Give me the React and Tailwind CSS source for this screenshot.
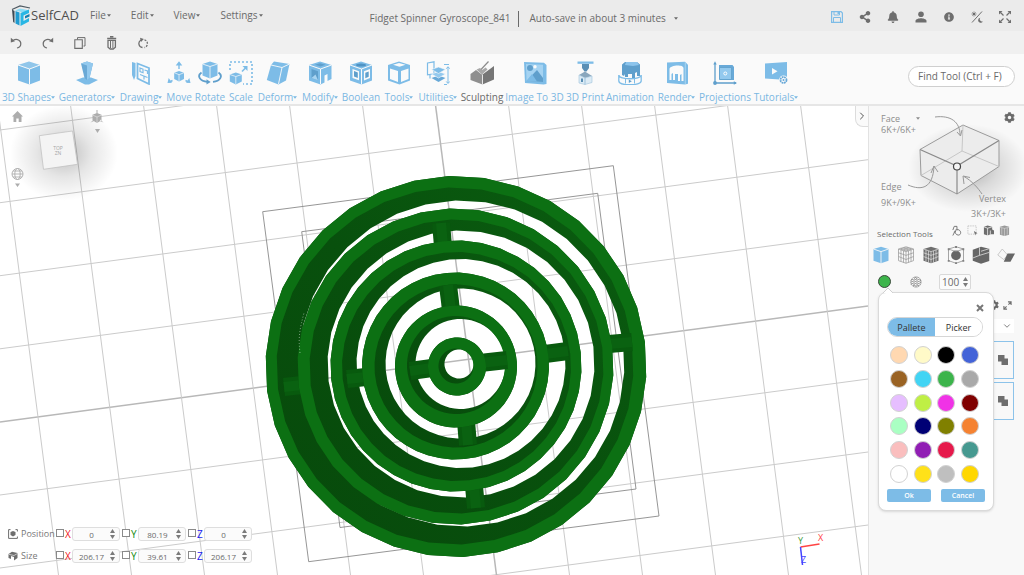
import React from "react";
import { ChevronDown, ChevronRight } from "lucide-react";
import { FaShareAlt, FaBell, FaInfoCircle, FaCog } from "react-icons/fa";

const BLUE = "#7dbce7";
const GRAY = "#6e6e6e";

/* ---------- small shared parts ---------- */

function Caret({ className = "" }) {
  return (
    <svg viewBox="0 0 4 3" className={`inline-block h-[3px] w-1 shrink-0 ${className}`} aria-hidden="true">
      <path d="M0 .3h4L2 2.800z" fill="currentColor" />
    </svg>
  );
}

function Svg({ children, box = "0 0 24 24", className = "size-6" }) {
  return (
    <svg viewBox={box} className={`shrink-0 ${className}`} fill="none" aria-hidden="true">
      {children}
    </svg>
  );
}

function Cube({ fill = BLUE, line = "#fafafa" }) {
  return (
    <g>
      <path d="M12 .5 23 4v15.500L12.500 23.500 1 19.500V4z" fill={fill} />
      <path d="M1 4l11.500 4L23 4M12.500 8v15.500" stroke={line} strokeWidth="1" />
      <path d="M12 .5 23 4 12.500 7.500 1 4z" fill="#fff" opacity=".15" />
    </g>
  );
}

/* ---------- toolbar drawings ---------- */

const icons = {
  shapes: (
    <Svg><Cube /></Svg>
  ),
  generators: (
    <Svg>
      <path d="M1 19l7-2.500h8l7 2.500-9 4.500h-4z" fill={BLUE} />
      <path d="M6 2.500 12 .5l6 2-3.500 14.500L12 19l-2.500-2z" fill="#6aa9d6" />
      <path d="M12 4.500 18 2.500l-3.500 14.500L12 19zM6 2.500 12 .5l6 2-6 2z" fill="#93c9ee" />
    </Svg>
  ),
  drawing: (
    <Svg>
      <path d="M3 1l3.500 1v13L5 19 3 14z" fill={BLUE} />
      <path d="M8.500 2.500l11.500 4.500V23L8.500 17.500z" stroke={BLUE} strokeWidth="1.800" />
      <path d="M11 7l3 1.200v3.500l-3-1.200zM15.500 9l3 1v3M11 13.500l7.500 3M15 15v3.500" stroke={BLUE} strokeWidth="1.200" />
    </Svg>
  ),
  move: (
    <Svg>
      <path d="M12 10l5 1.700V18l-5 2.500L7.200 18v-6.300z" fill={BLUE} />
      <path d="M7.200 11.700l4.900 2 4.900-2M12 13.700v6.500" stroke="#fafafa" strokeWidth=".7" />
      <path d="M12 8V3M5.500 19.500 2.500 21M18.500 19.500l3 1.500" stroke={BLUE} strokeWidth="1.400" />
      <path d="M12 .3 15.300 4.500H8.700zM.5 22l1.200-5 3.300 4.800zM23.500 22l-1.200-5-3.300 4.800z" fill={BLUE} />
    </Svg>
  ),
  rotate: (
    <Svg>
      <path d="M12 .5 19.500 3v11.500L12 17.500 4.500 14.500V3z" fill={BLUE} />
      <path d="M4.500 3 12 5.500 19.500 3M12 5.500v12" stroke="#fafafa" strokeWidth=".8" />
      <path d="M3.500 11.500C-1.500 15 2 20 9.500 20.800M20.500 11.500c5 3.500 1.500 8.500-5.500 9.300" stroke="#5f9fcc" strokeWidth="1.800" />
      <path d="M8.500 18.300l4.200 2.600-4.200 2.500z" fill="#5f9fcc" />
    </Svg>
  ),
  scale: (
    <Svg>
      <path d="M1 9V1h22v22H14" stroke={BLUE} strokeWidth="1.600" strokeDasharray="2 2" />
      <path d="M6.800 11.500l6 2v7l-6 3-6-3v-7z" fill={BLUE} />
      <path d="M.8 13.500l6 2 6-2M6.800 15.500v7.500" stroke="#fafafa" strokeWidth=".7" />
      <path d="M13 10.500l4-4" stroke={BLUE} strokeWidth="1.600" />
      <path d="M13.500 5h5v5z" fill={BLUE} />
    </Svg>
  ),
  deform: (
    <Svg>
      <path d="M8 .5 23.500 3 20 19.500 12.500 23.500.8 19 5 4z" fill={BLUE} />
      <path d="M5 4l11 2.500L23.500 3M16 6.500 12.500 23" stroke="#fafafa" strokeWidth=".9" />
    </Svg>
  ),
  modify: (
    <Svg>
      <path d="M12 .5 23.500 4v14l-4 2v-7l-3 1.500v7l-4 2L1 19.500V4z" fill={BLUE} />
      <path d="M1 4l11.500 4 11-4M12.500 8v15" stroke="#fafafa" strokeWidth="1" />
      <path d="M3.500 8l6.500 2.300v9L3.500 17z" fill="#5f9fcc" />
      <path d="M3.500 17l4-3.500 2.500 5.800z" fill="#a9d4f1" />
      <path d="M7 3.700l5-1.400 5.500 1.500-5 1.700z" fill="#5f9fcc" />
    </Svg>
  ),
  boolean: (
    <Svg>
      <path d="M12 .5 23 4v15.500L12.500 23.500 1 19.500V4z" fill={BLUE} />
      <path d="M1 4l11.500 4L23 4M12.500 8v15.500" stroke="#fafafa" strokeWidth="1" />
      <ellipse cx="12" cy="4" rx="5" ry="1.600" fill="#4f93c4" />
      <path d="M3.500 8l6.500 2.300v9L3.500 17zM15 10.300 21 8v9l-6 2.500z" fill="#fafafa" />
      <path d="M5 10l3.800 1.400v5.500L5 15.500zM16.300 11.700l3.400-1.300v5.300l-3.400 1.500z" fill="#5f9fcc" />
    </Svg>
  ),
  tools: (
    <Svg>
      <path d="M12 .5 23 4v15.500L12.500 23.500 1 19.500V4z" fill={BLUE} />
      <path d="M6 3.800 12 2l6.500 1.800-6 2zM3 7.500 11 10v11l-8-3zM14 10l7.500-2.500V18L14 21z" fill="#fafafa" />
    </Svg>
  ),
  utilities: (
    <Svg>
      <path d="M1.500 2 8 .8v12l-6.500 1zM4 13.500v4" stroke={BLUE} strokeWidth="1.200" />
      <path d="M5.500 17l7-2.500 7 2.500-7 4z" fill="#68a9d8" />
      <path d="M5.500 13l7-2.500 7 2.500-7 4z" fill="#93c9ee" stroke="#fafafa" strokeWidth=".6" />
      <path d="M5.500 8.500l7-2.500 7 2.500-7 4z" fill={BLUE} stroke="#fafafa" strokeWidth=".6" />
      <path d="M22 6v16M20.300 7.700 22 5.700l1.700 2M20.300 20.500l1.700 2 1.700-2M18 3.500h5M18 23.500h3" stroke={BLUE} strokeWidth="1" />
    </Svg>
  ),
  sculpting: (
    <Svg>
      <path d="M.5 13 6 9l6.500 5v9.500L.5 19z" fill="#8f8f8f" />
      <path d="M12.500 13.500 24 5v13.500l-11.500 5z" fill="#767676" />
      <path d="M12.500 14v9.500" stroke="#fafafa" strokeWidth=".8" />
      <path d="M6.500 8.500 12 13.500l5.500-5-1.800-2-3.700 2.500-2-2z" fill="#a8a8a8" />
      <path d="M18.500.5 11 8.500" stroke="#8b8b8b" strokeWidth="1.200" />
    </Svg>
  ),
  image: (
    <Svg>
      <path d="M1 1l20 .8 2.500 2.200v19l-3 .5L2 22z" fill={BLUE} />
      <path d="M3 3l17 .8v17L3.500 20z" fill="#a5d3f2" />
      <circle cx="7" cy="7" r="3" fill="#5f9fcc" />
      <circle cx="12" cy="5.800" r="1.700" fill="#fafafa" />
      <path d="M3.500 20 14 9l6 8v4z" fill="#5f9fcc" />
      <path d="M3.500 20 9 13l5 7.500z" fill={BLUE} />
    </Svg>
  ),
  print: (
    <Svg>
      <path d="M4.500.5h16v2.300h-16z" fill={BLUE} />
      <path d="M9 3h7v4l-2.500 3.500h-2L9 7z" fill="#5a8fb5" />
      <path d="M6 14l6-3.500L19 15l-7 2z" fill="#8aa7bd" />
      <path d="M6 14v8l6 1.500V17zM12 17l7-2v6.500l-7 2z" fill="#dcebf5" stroke="#9fc3dc" strokeWidth=".6" />
      <path d="M8 17.500h2V21H8z" fill="#5a8fb5" />
    </Svg>
  ),
  animation: (
    <Svg>
      <path d="M4 14V3.500L7 1h12l3 2.500V15H19v-4l-2 1v5h-3v-4H10v3H7v-3l-1 2z" fill="#5f9fcc" />
      <path d="M8 1h11l2 3-6 1-8-1z" fill="#8cc4ec" />
      <path d="M.8 14v6c0 5 22.400 5 22.400 0v-6M.8 14c0 5 22.400 5 22.400 0" stroke={BLUE} strokeWidth="1.300" />
      <path d="M7.500 17.500v5M16.500 17.500v5" stroke={BLUE} />
      <path d="M10.800 18.500v3.500l3-1.700z" fill="#5f9fcc" />
    </Svg>
  ),
  render: (
    <Svg>
      <path d="M2 1.500l18-.7 3 3v19l-3 .7L2 22z" fill={BLUE} />
      <path d="M20.300 1v22" stroke="#a9d4f1" />
      <path d="M4.500 8c0-4 14-5 14-1v13h-2v-7l-1.500 1v6h-2v-7h-3v6H8v-7l-1.500 1v6h-2z" fill="#fafafa" />
    </Svg>
  ),
  projections: (
    <Svg>
      <path d="M6 4h13.500L21 6v13H7l-1-1.500z" fill="#68a9d8" />
      <path d="M6.500 6.500h12v12h-12z" fill="#93c9ee" stroke="#5f9fcc" strokeWidth=".8" />
      <circle cx="12.300" cy="12.500" r="1.500" stroke="#fff" />
      <path d="M2 2v20h21" stroke="#5f9fcc" strokeWidth="1.300" />
      <path d="M.3 3.500 2 .3l1.700 3.200zM20.800 20.200 24 22l-3.200 1.800z" fill="#5f9fcc" />
      <circle cx="2" cy="22" r="1.900" fill="#5f9fcc" />
    </Svg>
  ),
  tutorials: (
    <Svg>
      <path d="M1 2.500l22-1.500v18L1 17.500z" fill={BLUE} />
      <path d="M8 7v6.500l5.500-3.200z" fill="#fafafa" />
      <circle cx="19.500" cy="19" r="4.500" fill="#fafafa" />
      <circle cx="19.500" cy="19" r="3" stroke="#68a9d8" strokeWidth="1.800" strokeDasharray="1.800 .6" />
      <circle cx="19.500" cy="19" r="1" fill="#68a9d8" />
    </Svg>
  ),
};

const tools = [
  { label: "3D Shapes", icon: "shapes", menu: true, w: "w-[57px]" },
  { label: "Generators", icon: "generators", menu: true, w: "w-[60px]" },
  { label: "Drawing", icon: "drawing", menu: true, w: "w-12" },
  { label: "Move", icon: "move", w: "w-7" },
  { label: "Rotate", icon: "rotate", w: "w-[34px]" },
  { label: "Scale", icon: "scale", w: "w-7" },
  { label: "Deform", icon: "deform", menu: true, w: "w-[45px]" },
  { label: "Modify", icon: "modify", menu: true, w: "w-10" },
  { label: "Boolean", icon: "boolean", w: "w-[42px]" },
  { label: "Tools", icon: "tools", menu: true, w: "w-[34px]" },
  { label: "Utilities", icon: "utilities", menu: true, w: "w-11" },
  { label: "Sculpting", icon: "sculpting", w: "w-11", dark: true },
  { label: "Image To 3D", icon: "image", w: "w-[61px]" },
  { label: "3D Print", icon: "print", w: "w-10" },
  { label: "Animation", icon: "animation", w: "w-[50px]" },
  { label: "Render", icon: "render", menu: true, w: "w-[43px]" },
  { label: "Projections", icon: "projections", w: "w-[54px]" },
  { label: "Tutorials", icon: "tutorials", menu: true, w: "w-12" },
];

/* ---------- header ---------- */

function Header() {
  return (
    <header className="flex h-[31px] items-center bg-[#ebebeb] text-[10px] text-[#6a6a6a]">
      <a href="#home" className="ml-[11px] flex w-[79px] shrink-0 items-center">
        <Svg box="0 0 20 22" className="h-[22px] w-5">
          <path d="M1 4.500 9 1l10 2" stroke="#4e5a63" strokeWidth="1.200" />
          <path d="M1 4.500 3.500 6v12L2.200 17z" fill="#3d4a54" />
          <path d="M4.500 6 8.500 7.500v13L4.500 18.500z" fill="#1f9bd0" />
          <path d="M4 5.500 9 3.500l9 1.700-5.500 2.300z" fill="#8fdcf5" />
          <path d="M9.500 8l8.500-3.500v3.500l-5.500 2.500v5.500l5.500-3v3.500L9.500 21z" fill="#28b6e4" />
          <path d="M14 11l4.500-2v2.500L14 13.500z" fill="#147fb0" />
        </Svg>
        <span className="text-[13px] leading-none text-[#4f4f4f]">SelfCAD</span>
      </a>
      <nav className="flex gap-5">
        {["File", "Edit", "View", "Settings"].map((m) => (
          <button key={m} className="flex items-center gap-px">
            {m}
            <Caret />
          </button>
        ))}
      </nav>
      <div className="ml-[107px] flex items-center whitespace-nowrap pt-1.5">
        <span>Fidget Spinner Gyroscope_841</span>
        <span className="ml-2 h-4 w-px bg-[#6a6a6a]" />
        <button className="ml-2.5 flex items-center gap-2">
          Auto-save in about 3 minutes
          <Caret />
        </button>
      </div>
      <div className="ml-auto mr-[13px] flex items-center gap-4 pt-0.5 text-[#6e6e6e]">
        <button aria-label="Save">
          <Svg box="0 0 12 12" className="size-3">
            <path d="M.6.6h9.400l1.400 1.400v9.400H.6z" stroke={BLUE} strokeWidth="1.200" />
            <path d="M3 1v3h5.500V1M2.500 11.500v-5h7v5" stroke={BLUE} />
            <path d="M6.500 1H8v2H6.500z" fill={BLUE} />
          </Svg>
        </button>
        <button aria-label="Share"><FaShareAlt className="size-3" /></button>
        <button aria-label="Notifications"><FaBell className="size-3" /></button>
        <button aria-label="Account">
          <Svg box="0 0 12 12" className="size-3">
            <circle cx="6" cy="3.300" r="2.800" fill={GRAY} />
            <path d="M.5 11.500V10C.5 8 4 7.200 6 7.200s5.500.8 5.500 2.800v1.500z" fill={GRAY} />
          </Svg>
        </button>
        <button aria-label="Information"><FaInfoCircle className="size-3 p-px" /></button>
        <button aria-label="Theme">
          <Svg box="0 0 12 12" className="size-3">
            <path d="M1 11.500 11 .5" stroke={GRAY} />
            <circle cx="3" cy="3" r="1.300" fill={GRAY} />
            <path d="M3 .2v5.600M.2 3h5.600M1 1l4 4M5 1 1 5" stroke={GRAY} strokeWidth=".5" />
            <path d="M9.300 6.800a2.500 2.500 0 1 0 2.600 3.400A2.200 2.200 0 0 1 9.300 6.800z" fill={GRAY} />
          </Svg>
        </button>
        <button aria-label="Full screen">
          <Svg box="0 0 12 12" className="size-3">
            <path d="M4.500 4.500 1.500 1.500M7.500 4.500l3-3M4.500 7.500l-3 3M7.500 7.500l3 3" stroke={GRAY} strokeWidth="1.200" />
            <path d="M0 0h3.500L0 3.500zM12 0H8.500L12 3.500zM0 12h3.500L0 8.500zM12 12H8.500L12 8.500z" fill={GRAY} />
          </Svg>
        </button>
      </div>
    </header>
  );
}

function QuickBar() {
  return (
    <div className="flex h-[23px] items-center gap-5 bg-[#f0f0f0] pl-2.5">
      <button aria-label="Undo">
        <Svg box="0 0 12 12" className="size-3">
          <path d="M3 3.500C7 1 11 3.500 10.800 7c-.1 2-1.500 3.500-3.800 4" stroke={GRAY} strokeWidth="1.200" />
          <path d="M.8.8v4.700L5 4.300z" fill={GRAY} />
        </Svg>
      </button>
      <button aria-label="Redo">
        <Svg box="0 0 12 12" className="size-3">
          <path d="M9 3.500C5 1 1 3.500 1.200 7c.1 2 1.500 3.500 3.800 4" stroke={GRAY} strokeWidth="1.200" />
          <path d="M11.200.8v4.700L7 4.300z" fill={GRAY} />
        </Svg>
      </button>
      <button aria-label="Copy">
        <Svg box="0 0 12 12" className="size-3">
          <path d="M3.500 2.500V.6h7.500V9H9.500" stroke={GRAY} strokeWidth="1" />
          <path d="M.8 2.800h7.500v8.600H.8z" stroke={GRAY} strokeWidth="1.100" />
        </Svg>
      </button>
      <button aria-label="Delete">
        <Svg box="0 0 12 14" className="h-3.5 w-3">
          <path d="M4 .8h3.400M1.200 2.500h9" stroke={GRAY} strokeWidth="1.400" />
          <path d="M2 4.300h7.400v7L7.200 13h-3L2 11.300z" stroke={GRAY} strokeWidth="1.300" />
          <path d="M4.500 4.500v7.500M6.900 4.500v7.500" stroke={GRAY} />
        </Svg>
      </button>
      <button aria-label="Repeat">
        <Svg box="0 0 12 12" className="size-3">
          <path d="M4.500 10.500A4 4 0 0 1 3 3" stroke={GRAY} strokeWidth="1.300" />
          <path d="M6.500 2.800a4 4 0 0 1 0 7.700" stroke={GRAY} strokeWidth="1.300" strokeDasharray="2 1.200" />
          <path d="M2 .8 5.800 2 3 5z" fill={GRAY} />
        </Svg>
      </button>
    </div>
  );
}

function Toolbar() {
  return (
    <div className="flex h-[52px] items-center border-b-2 border-[#e6e6e6] bg-[#fafafa]">
      {tools.map((t) => (
        <button
          key={t.label}
          className={`flex shrink-0 flex-col items-center gap-1 whitespace-nowrap pt-2 text-[10px] leading-4 ${t.w} ${
            t.dark ? "text-[#6a6a6a]" : "text-[#7ab7e2]"
          }`}
        >
          {icons[t.icon]}
          <span className="flex items-center">
            {t.label}
            {t.menu && <Caret />}
          </span>
        </button>
      ))}
      <input
        type="text"
        aria-label="Find tool"
        placeholder="Find Tool (Ctrl + F)"
        className="mb-1.5 ml-auto mr-[9px] h-[21px] w-[107px] rounded-full border border-[#cfcfcf] bg-white px-[9px] text-[10px] text-[#6a6a6a] placeholder:text-[#6a6a6a]"
      />
    </div>
  );
}

/* ---------- scene ---------- */

function polygon(cx, cy, r, n, turn = 0) {
  let d = "";
  for (let i = 0; i < n; i++) {
    const a = ((i + turn) / n) * Math.PI * 2;
    d += `${i ? "L" : "M"}${(cx + r * Math.cos(a)).toFixed(1)} ${(cy + r * Math.sin(a)).toFixed(1)}`;
  }
  return d + "Z";
}

/* outer edge, inner edge of the top face, opening, and struts reaching inward */
const rings = [
  {
    n: 34, outer: [456, 366.5, 190.5], rim: [455, 366, 178.5], hole: [461.5, 363.5, 163],
    struts: [[284, 387, 302, 385], [609, 344, 632, 342]],
  },
  {
    n: 34, outer: [455.5, 366.5, 158], rim: [456.5, 366.5, 147], hole: [461, 364, 133.5],
    struts: [[441, 223, 443, 246], [474, 486, 476, 508]],
  },
  {
    n: 40, outer: [456, 366, 125.5], rim: [456.5, 366.5, 114.5], hole: [461, 363.5, 104.500],
    struts: [[347, 379, 366, 377], [545, 354, 568, 351]],
  },
  {
    n: 48, outer: [455.5, 366, 93.5], rim: [456, 366, 81.5], hole: [460.5, 363.5, 75],
    struts: [[448, 285, 451, 310], [466, 421, 468, 445]],
  },
  {
    n: 60, outer: [456, 366.5, 61], rim: [456, 365, 49], hole: [460.5, 364, 45],
    struts: [[410, 371, 432, 368], [480, 363, 507, 360]],
  },
  { n: 60, outer: [457, 366.5, 29], rim: [456, 366, 17.5], hole: [459, 364, 14.5], struts: [] },
];

function Scene() {
  const across = [130, 202.7, 275.7, 348.8, 422, 495, 568, 641];
  const down = [-2.5, 70.5, 143.5, 216.5, 289.5, 362.5, 435.5, 508.5, 581.5, 654.5, 727.5, 800.5];
  return (
    <svg viewBox="0 106 868 469" preserveAspectRatio="xMinYMin slice" className="absolute inset-0 size-full" role="img" aria-label="3D view of the gyroscope model">
      <defs>
        <linearGradient id="wall" x1="0" y1="1" x2="1" y2="0">
          <stop offset="0" stopColor="#07490b" />
          <stop offset=".5" stopColor="#08500d" />
          <stop offset="1" stopColor="#0a5e10" />
        </linearGradient>
        <radialGradient id="shade">
          <stop offset="0" stopColor="#000" stopOpacity=".26" />
          <stop offset=".5" stopColor="#000" stopOpacity=".1" />
          <stop offset="1" stopColor="#000" stopOpacity="0" />
        </radialGradient>
      </defs>
      <g>
        {across.map((y, i) => (
          <path key={y} d={`M0 ${y}L868 ${y - 116}`} strokeWidth={i === 4 ? 1.5 : 1} stroke={i === 4 ? "#b8b8b8" : "#cbcbcb"} />
        ))}
        {down.map((x, i) => (
          <path key={x} d={`M${x} 105L${x + 61} 575`} strokeWidth={i === 6 ? 1.5 : 1} stroke={i === 6 ? "#b8b8b8" : "#cbcbcb"} />
        ))}
      </g>
      <g fill="none" stroke="#8a8a8a" strokeWidth=".9">
        <path d="M262.700 211.700 613.300 165.700 659 516 308.700 561.700z" />
        <path d="M301.700 231.700 597.700 193.300 636 489 340 527.500z" />
      </g>
      {rings.map((r) => (
        <g key={r.outer[2]}>
          <path d={polygon(...r.outer, r.n, 0.3) + polygon(...r.hole, r.n, 0.3)} fill="url(#wall)" fillRule="evenodd" />
          <path d={polygon(...r.outer, r.n, 0.3) + polygon(...r.rim, r.n, 0.3)} fill="#0c7013" fillRule="evenodd" />
          {r.struts.map((s) => (
            <g key={s.join()}>
              <path d={`M${s[0]} ${s[1]}L${s[2]} ${s[3]}`} stroke="#085a0e" strokeWidth="18" />
              <path d={`M${s[0]} ${s[1]}L${s[2]} ${s[3]}`} stroke="#0a6211" strokeWidth="10" />
            </g>
          ))}
        </g>
      ))}
      <path d="M300 353c-2-16 0-25 4-40" fill="none" stroke="#fff" strokeWidth=".8" strokeDasharray="1 2" opacity=".6" />
      <ellipse cx="64" cy="153" rx="54" ry="48" fill="url(#shade)" />
      <path d="M39.300 135.700 72.500 131l5 33.300-34 5z" fill="#f4f4f4" stroke="#bdbdbd" strokeWidth=".7" />
      <g fontSize="5" fill="#a5a5a5" textAnchor="middle" fontFamily="Open Sans, sans-serif">
        <text x="58" y="150">TOP</text>
        <text x="58" y="154.500">ZN</text>
      </g>
      <g fill="#adadad">
        <path d="M12 116.500 17.500 111l5.500 5.500h-1.500V122h-2.800v-3.500h-2.400v3.500h-2.800v-5.500z" />
        <path d="M97 113l4.500 1.800v5.400l-4.500 2.800-4.500-2.800v-5.400zM96.500 110h1v4h-1zM90.500 122.500l3.500-3v1.500zM103.500 122.500l-3.500-3v1.500zM95 129h5l-2.500 4zM15 183.500h5l-2.500 3.500z" />
      </g>
      <path d="M92.500 115l4.500 2 4.500-2M97 117v6" fill="none" stroke="#e8e8e8" strokeWidth=".6" />
      <g fill="none" stroke="#adadad" strokeWidth=".9">
        <circle cx="17.500" cy="174" r="5.500" />
        <ellipse cx="17.500" cy="174" rx="2.700" ry="5.500" />
        <path d="M12 174h11M13 171h9M13 177h9" />
      </g>
      <g fill="none" strokeWidth="1.500">
        <path d="M800.500 547l19-3" stroke="#f44" />
        <path d="M800.500 547l2 18" stroke="#44f" />
      </g>
      <g fontSize="9" fontFamily="Open Sans, sans-serif">
        <text x="798" y="544" fill="#3a9a3a">Y</text>
        <text x="818" y="541" fill="#f44">X</text>
        <text x="801" y="563" fill="#44f">Z</text>
      </g>
    </svg>
  );
}

/* ---------- transform fields ---------- */

function Steppers({ name }) {
  return (
    <span className="flex flex-col gap-0.5 text-[#7a7a7a]">
      <button aria-label={`Increase ${name}`}>
        <Svg box="0 0 5 4" className="h-1 w-[5px]"><path d="M0 4h5L2.500 0z" fill="currentColor" /></Svg>
      </button>
      <button aria-label={`Decrease ${name}`}>
        <Svg box="0 0 5 4" className="h-1 w-[5px]"><path d="M0 0h5L2.500 4z" fill="currentColor" /></Svg>
      </button>
    </span>
  );
}

const axes = [
  { axis: "X", color: "text-[#f01818]" },
  { axis: "Y", color: "text-[#0d8a0d]" },
  { axis: "Z", color: "text-[#2222f0]" },
];

function TransformRow({ label, icon, values }) {
  return (
    <div className="flex h-[22px] items-center">
      {icon}
      <span className="ml-[3px] w-[35px] text-[9px] text-[#777]">{label}</span>
      {axes.map(({ axis, color }, i) => (
        <div key={axis} className="flex w-[66px] items-center">
          <input
            type="checkbox"
            aria-label={`Lock ${label} ${axis}`}
            className="mb-0.5 size-2 shrink-0 appearance-none border border-[#8a8a8a] bg-white"
          />
          <label htmlFor={`${label}-${axis}`} className={`w-2 pl-px text-[10px] leading-none ${color}`}>{axis}</label>
          <span className="flex h-3.5 w-12 items-center rounded-[3px] border border-[#dedede] bg-[#fbfbfb] pr-1">
            <input
              id={`${label}-${axis}`}
              defaultValue={values[i]}
              inputMode="decimal"
              className="w-full min-w-0 bg-transparent text-center text-[8px] leading-none text-[#6a6a6a]"
            />
            <Steppers name={`${label} ${axis}`} />
          </span>
        </div>
      ))}
    </div>
  );
}

/* ---------- right panel ---------- */

function SelectionDiagram() {
  return (
    <div className="relative h-[118px] text-[9px] leading-[11px] text-[#8d8d8d]">
      <svg viewBox="869 106 155 118" className="absolute inset-0 h-full w-full" fill="none" aria-hidden="true">
        <defs>
          <radialGradient id="cast">
            <stop offset="0" stopColor="#000" stopOpacity=".3" />
            <stop offset=".5" stopColor="#000" stopOpacity=".12" />
            <stop offset="1" stopColor="#000" stopOpacity="0" />
          </radialGradient>
        </defs>
        <ellipse cx="968" cy="168" rx="60" ry="44" fill="url(#cast)" />
        <path d="M920 149.500 963 125l36 15.500v26L957 194l-36-18.500z" fill="#ececec" stroke="#9b9b9b" />
        <path d="M963 125l-1 26-41 24.500M962 151l37 15.500" stroke="#bcbcbc" strokeWidth=".8" />
        <path d="M920 149.500 957 166l42-25.500M957 166v28" stroke="#8a8a8a" strokeWidth="1.200" />
        <circle cx="957" cy="166.500" r="3.500" fill="#f4f4f4" stroke="#444" strokeWidth="1.200" />
        <g stroke="#999">
          <path d="M935 117c16-2 25 5 25 18M957 132l3.500 4 1.500-6" />
          <path d="M908 185c14 6 25 3 26-19M931 173l3-7 4 6" />
          <path d="M982 194c-4-6-10-13-18-17.500M964 184l-1-8 7 1.500" />
        </g>
      </svg>
      <button className="absolute left-3 top-[7px] flex h-[11px] items-center">
        Face
        <Caret className="ml-4" />
      </button>
      <span className="absolute left-3 top-[18px]">6K+/6K+</span>
      <span className="absolute left-3 top-[75px]">Edge</span>
      <span className="absolute left-3 top-[91px]">9K+/9K+</span>
      <span className="absolute right-[18px] top-[87px]">Vertex</span>
      <span className="absolute right-[18px] top-[102px]">3K+/3K+</span>
      <button aria-label="Selection settings" className="absolute right-[9px] top-[6px] text-[#6a6a6a]">
        <FaCog className="size-[11px]" />
      </button>
    </div>
  );
}

function MiniTools() {
  return (
    <div className="flex items-center gap-[5px]">
      <button aria-label="Lasso select" className="flex">
        <Svg box="0 0 12 12" className="size-[11px]">
          <path d="M3.500 8C4 5 7.500 4 9.500 6s1 5-1.500 5-4-2.500-3-4.500" stroke={GRAY} />
          <path d="M6.500 6V1.500H3.500l-1.500 4M2 11.500l2-4" stroke={GRAY} />
        </Svg>
      </button>
      <button aria-label="Box select" className="flex">
        <Svg box="0 0 12 12" className="size-[11px]">
          <path d="M1 1h9v9H1z" stroke="#b5b5b5" strokeWidth=".8" strokeDasharray="1.500 1" />
          <path d="M7.500 6.500l4 2.500-2 .5-.5 2z" fill={GRAY} />
        </Svg>
      </button>
      <button aria-label="Select visible" className="flex">
        <Svg box="0 0 12 12" className="size-[11px]">
          <path d="M5 .5l5 1.500v3l2 1v4H8l-3 1.500L1 10V2z" fill={GRAY} />
          <path d="M1 2l4 1.500L10 2M5 3.500V12M8 6v4" stroke="#f8f8f8" strokeWidth=".8" />
        </Svg>
      </button>
      <button aria-label="Select through" className="flex">
        <Svg box="0 0 12 12" className="size-[11px]">
          <path d="M6 .5l5 1.500v8.500L6 12l-5-1.500V2z" fill="#9a9a9a" />
          <path d="M3 3v7.500M6 3.500V12M9 3v7.500M1 2.500l5 1.200 5-1.200" stroke="#d5d5d5" strokeWidth=".7" />
        </Svg>
      </button>
    </div>
  );
}

const hex = "M12 1 22 4v15.500L12 23 2 19.500V4z";
const selectionModes = [
  ["Object", <g key="a"><path d={hex} fill={BLUE} /><path d="M2 4l10 3.500L22 4M12 7.500V23" stroke="#f8f8f8" strokeWidth="1.200" /></g>],
  ["Wireframe", <g key="b" stroke="#9a9a9a" strokeWidth="1"><path d={hex} /><path d="M2 4l10 3.500L22 4M12 7.500V23M5.300 5v15.500M8.700 6.500v15.500M15.300 6.500v15.500M18.700 5v15.500M2 9l10 3.500L22 9M2 14l10 4 10-4M5 3l10.500 3.500M9 2l10 3M19 3 8.500 6.500M15 2 5 5" /></g>],
  ["Face", <g key="c"><path d={hex} fill={GRAY} /><path d="M2 4l10 3.500L22 4M12 7.500V23M5.300 5v15.500M8.700 6.500v15.500M15.300 6.500v15.500M18.700 5v15.500M2 9l10 3.500L22 9M2 14l10 4 10-4" stroke="#e4e4e4" strokeWidth=".9" /></g>],
  ["Vertex", <g key="d"><path d={hex} stroke="#8a8a8a" /><circle cx="12" cy="12.500" r="6.500" fill="#666" /><path d="M2 4l10 3.500L22 4" stroke="#8a8a8a" /><g fill="#808080"><path d="M1 3h2.500v2.500H1zM20.500 3h2.500v2.500h-2.500zM1 18.500h2.500V21H1zM20.500 18.500h2.500V21h-2.500zM10.800 0h2.500v2.500h-2.500zM10.800 21.500h2.500V24h-2.500z" /></g></g>],
  ["Profile", <g key="e"><path d="M12 1 23 3.500V20L12 23.500 1 19.500V5z" fill="#666" /><path d="M10 2v10.500L1 16M10 12.500l13-4M12 7l11-3.500" stroke="#e6e6e6" /></g>],
  ["Plane", <g key="f"><path d="M1 12 7 4l7 8-5 6z" stroke="#bbb" /><path d="M9 21l5-11h10l-6 11z" fill="#666" /></g>],
];

const palette = [
  ["Peach", "bg-[#ffd8b1]"], ["Cream", "bg-[#fffac8]"], ["Black", "bg-black"], ["Blue", "bg-[#4363d8]"],
  ["Brown", "bg-[#9a6324]"], ["Cyan", "bg-[#42d4f4]"], ["Green", "bg-[#3cb44b]"], ["Gray", "bg-[#a9a9a9]"],
  ["Lavender", "bg-[#e6beff]"], ["Lime", "bg-[#bfef45]"], ["Magenta", "bg-[#f032e6]"], ["Maroon", "bg-[#800000]"],
  ["Mint", "bg-[#aaffc3]"], ["Navy", "bg-[#000075]"], ["Olive", "bg-[#808000]"], ["Orange", "bg-[#f58231]"],
  ["Pink", "bg-[#fabebe]"], ["Purple", "bg-[#911eb4]"], ["Red", "bg-[#e6194b]"], ["Teal", "bg-[#469990]"],
  ["White", "bg-white"], ["Yellow", "bg-[#ffe119]"], ["Silver", "bg-[#bfbfbf]"], ["Gold", "bg-[#ffd700]"],
];

function ColorPopover() {
  return (
    <div role="dialog" aria-label="Color" className="absolute left-[9px] top-[22px] z-10 w-[116px] rounded-lg border border-[#dadada] bg-white px-2 pb-2 pt-1.5 shadow-sm">
      <Svg box="0 0 10 5" className="absolute left-1 top-[-5px] h-[5px] w-2.5">
        <path d="M0 5 5 0l5 5" fill="#fff" stroke="#d0d0d0" />
      </Svg>
      <div className="flex h-[18px] items-center justify-end">
        <button aria-label="Close" className="flex size-2.5 items-center justify-center">
          <Svg box="0 0 8 8" className="size-2"><path d="M1 1l6 6M7 1 1 7" stroke="#777" strokeWidth="2" /></Svg>
        </button>
      </div>
      <div className="mr-0.5 flex h-5 overflow-hidden rounded-full border border-[#d6d6d6] text-[9px] text-[#333]">
        <button className="flex-1 bg-[#7dbce7] pt-0.5">Pallete</button>
        <button className="flex-1 bg-white pt-0.5">Picker</button>
      </div>
      <div className="mt-[9px] grid h-[137px] grid-cols-[repeat(4,18px)] content-between justify-between pl-[3px] pr-[6px]">
        {palette.map(([name, color]) => (
          <button key={name} aria-label={name} className={`size-[18px] rounded-full border border-[#d2d2d2] ${color}`} />
        ))}
      </div>
      <div className="mt-1.5 flex justify-between text-[7px] font-semibold leading-none text-white">
        <button className="h-[13px] w-11 rounded-xs bg-[#7dbce7]">Ok</button>
        <button className="h-[13px] w-11 rounded-xs bg-[#7dbce7]">Cancel</button>
      </div>
    </div>
  );
}

function UnionIcon() {
  return (
    <Svg box="0 0 10 10" className="size-2.5">
      <path d="M0 0h6.500v3.500H10V10H3.500V6.500H0z" fill={GRAY} />
    </Svg>
  );
}

function SidePanel() {
  return (
    <aside className="w-[156px] shrink-0 border-l border-[#e2e2e2] bg-[#f8f8f8] text-[#6a6a6a]">
      <SelectionDiagram />
      <div className="flex h-4 items-start justify-between pl-2 pr-3.5 pt-px">
        <h2 className="pt-[5px] text-[8px] leading-none">Selection Tools</h2>
        <MiniTools />
      </div>
      <div className="flex h-[30px] items-center gap-[7px] pl-[3px]">
        {selectionModes.map(([name, drawing]) => (
          <button key={name} aria-label={name} className="flex"><Svg className="size-[18px]">{drawing}</Svg></button>
        ))}
      </div>
      <div className="relative flex h-[23px] items-center">
        <button aria-label="Model color" className="ml-[9px] size-[13px] rounded-full border border-[#3a4a3a] bg-[#3cb44b]" />
        <button aria-label="Texture" className="ml-[19px]">
          <Svg box="0 0 12 12" className="size-3">
            <circle cx="6" cy="6" r="5.200" stroke="#999" strokeWidth=".7" />
            <path d="M1 4.500l1.500-1.500L4 4.500 5.500 3 7 4.500 8.500 3 10 4.500 11 4M1 6.500 2.500 5 4 6.500 5.500 5 7 6.500 8.500 5 10 6.500 11 6M1 8.500 2.500 7 4 8.500 5.500 7 7 8.500 8.500 7 10 8.500M3 10l1.500-1L6 10.500 7.500 9 9 10M4 2.500 5.500 1.500 7 2.500 8 1.500" stroke={GRAY} strokeWidth=".8" />
          </Svg>
        </button>
        <span className="ml-[17px] flex h-4 w-8 items-center rounded-xs border border-[#d9d9d9] bg-[#fbfbfb] pr-0.5">
          <input aria-label="Opacity" defaultValue="100" inputMode="numeric" className="w-full min-w-0 bg-transparent pl-0.5 text-[10px] leading-none" />
          <Steppers name="opacity" />
        </span>
        <ColorPopover />
      </div>
      <div className="flex h-6 items-center justify-end gap-1 pr-3">
        <button aria-label="List settings"><FaCog className="size-2.5" /></button>
        <button aria-label="Expand list">
          <Svg box="0 0 10 10" className="size-[9px]">
            <path d="M1 9l3-3M6 4l3-3M1 5.500V9h3.500M5.500 1H9v3.500" stroke={GRAY} strokeWidth="1.200" />
          </Svg>
        </button>
      </div>
      <button aria-label="Object filter" className="ml-[9px] mt-0.5 flex h-3.5 w-[136px] items-center justify-end bg-white pr-0.5">
        <ChevronDown className="size-2.5" />
      </button>
      <ul className="ml-[9px] mt-2 flex w-[136px] flex-col gap-[3px]">
        {["Ring group", "Axle group"].map((name) => (
          <li key={name} className="flex h-[38px] items-center justify-end border border-[#8cc3ea] pr-[5px]">
            <button aria-label={`Merge ${name}`}><UnionIcon /></button>
          </li>
        ))}
      </ul>
    </aside>
  );
}

/* ---------- page ---------- */

export default function App() {
  return (
    <div className="flex min-h-screen flex-col overflow-hidden bg-white font-['Open_Sans','Noto_Sans',sans-serif]">
      <Header />
      <QuickBar />
      <Toolbar />
      <main className="flex flex-1">
        <section className="relative flex flex-1 flex-col justify-end overflow-hidden">
          <Scene />
          <button aria-label="Collapse panel" className="absolute right-0 top-0 flex h-[21px] w-[13px] items-center justify-center rounded-bl-lg border-b border-l border-[#dcdcdc] bg-[#fafafa] text-[#555]">
            <ChevronRight className="size-3.5" />
          </button>
          <div className="relative mb-2 ml-2">
            <TransformRow
              label="Position"
              values={["0", "80.19", "0"]}
              icon={
                <Svg box="0 0 10 10" className="size-2.5">
                  <path d="M2.500.6H.6v8.800h8.800V7.500M7.500.6h1.900v1.900" stroke={GRAY} />
                  <path d="M5 2l2.500 1v3L5 7.500 2.500 6V3z" fill={GRAY} />
                </Svg>
              }
            />
            <TransformRow
              label="Size"
              values={["206.17", "39.61", "206.17"]}
              icon={
                <Svg box="0 0 10 10" className="size-2.5">
                  <path d="M4 .8 9.500 2v5L6 9.500V6L3 5v3L.5 7V3z" fill={GRAY} />
                  <path d="M.8 3.300 6 4.500 9.500 2.500" stroke="#fff" strokeWidth=".6" />
                </Svg>
              }
            />
          </div>
        </section>
        <SidePanel />
      </main>
    </div>
  );
}
